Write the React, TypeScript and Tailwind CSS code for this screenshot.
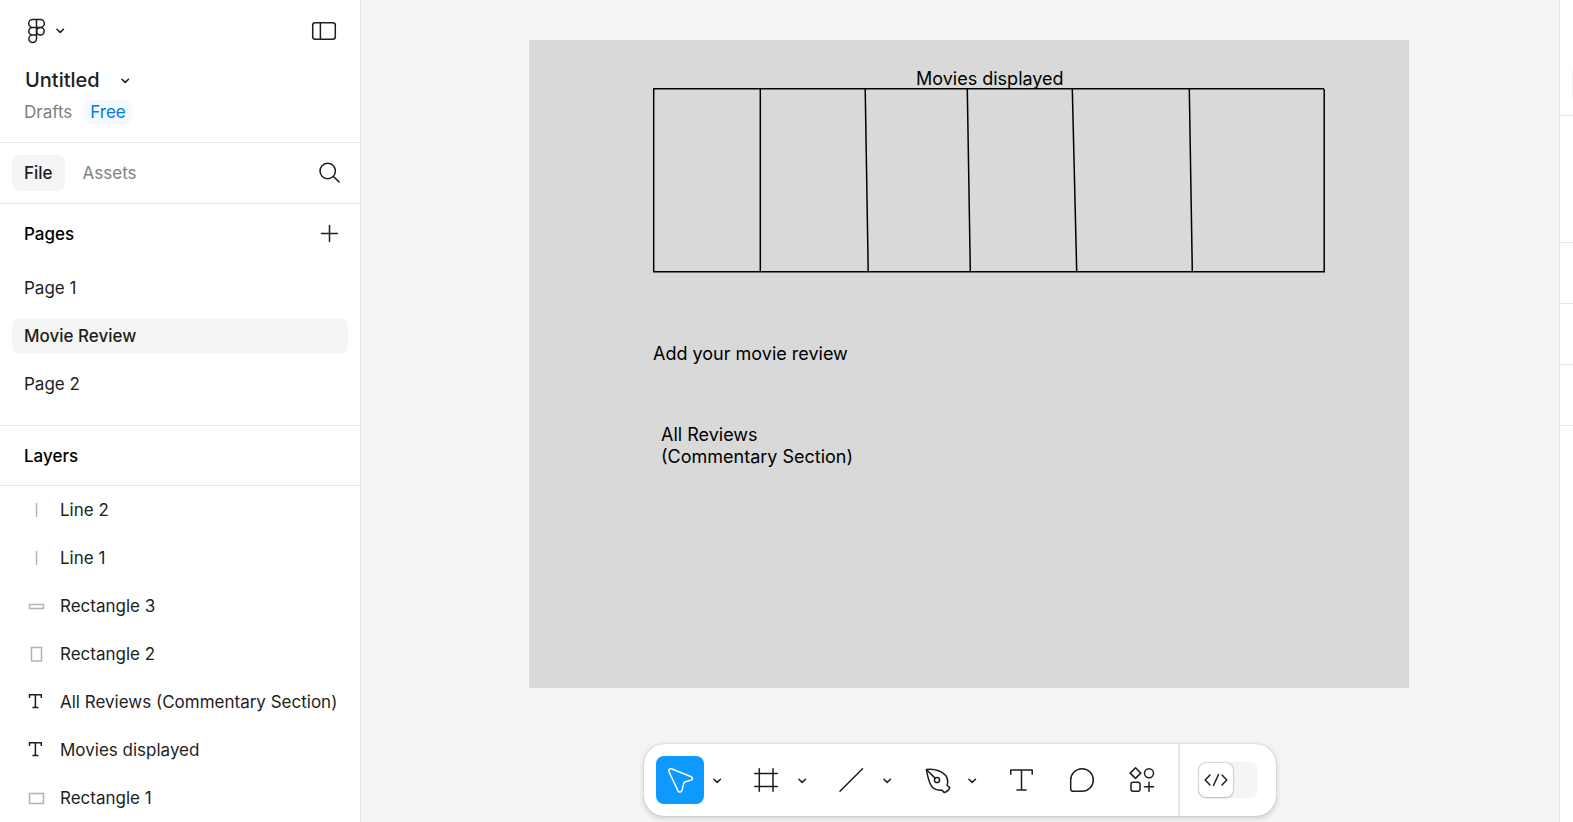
import React, { useState } from "react";

type IconProps = { className?: string; children: React.ReactNode };

/* All interface icons are drawn on a 36-unit grid. */
function Icon({ className = "", children }: IconProps) {
  return (
    <svg
      viewBox="0 0 36 36"
      className={`size-9 shrink-0 ${className}`}
      fill="none"
      stroke="currentColor"
      strokeWidth="1.5"
      strokeLinecap="round"
      strokeLinejoin="round"
      aria-hidden="true"
    >
      {children}
    </svg>
  );
}

function Chevron() {
  return (
    <svg viewBox="0 0 12 12" className="size-3 shrink-0" fill="none" stroke="currentColor" strokeWidth="1.5" strokeLinecap="round" strokeLinejoin="round" aria-hidden="true">
      <path d="M2.900 5.200 6.200 8.400l3.300-3.200" />
    </svg>
  );
}

type LayerKind = "line" | "wide" | "tall" | "text" | "rect";

function LayerIcon({ kind }: { kind: LayerKind }) {
  return (
    <svg viewBox="0 0 24 24" className="size-6 shrink-0" fill="none" stroke="#b3b3b3" strokeWidth="1.5" aria-hidden="true">
      {kind === "line" && <path d="M12.500 5v14" />}
      {kind === "wide" && <rect x="5.500" y="10.500" width="14" height="4" />}
      {kind === "tall" && <rect x="7.500" y="5.500" width="10" height="13.500" />}
      {kind === "rect" && <rect x="5.500" y="7.500" width="14" height="10" />}
      {kind === "text" && <path d="M5.500 8V4.800h11.800V8M11.400 4.800v13M8.400 17.500h6" stroke="#1e1e1e" />}
    </svg>
  );
}

const pages = ["Page 1", "Movie Review", "Page 2"];

const layers: { name: string; kind: LayerKind }[] = [
  { name: "Line 2", kind: "line" },
  { name: "Line 1", kind: "line" },
  { name: "Rectangle 3", kind: "wide" },
  { name: "Rectangle 2", kind: "tall" },
  { name: "All Reviews (Commentary Section)", kind: "text" },
  { name: "Movies displayed", kind: "text" },
  { name: "Rectangle 1", kind: "rect" },
];

function LeftPanel() {
  const [page, setPage] = useState("Movie Review");
  return (
    <aside className="flex w-[361px] shrink-0 flex-col border-r border-[#e6e6e6] bg-white">
      <header className="flex h-[143px] shrink-0 flex-col border-b border-[#e6e6e6] px-[18px] pt-3">
        <div className="flex items-center justify-between">
          <button className="flex items-center" aria-label="Main menu">
            <Icon>
              <path d="M18.500 7.600h-3.900a3.900 3.900 0 0 0 0 7.800h3.900zM18.500 7.600h3.900a3.900 3.900 0 0 1 0 7.800h-3.900M18.500 15.400h-3.900a3.800 3.800 0 0 0 0 7.600h3.900zM14.600 23a3.800 3.800 0 1 0 3.900 3.800V23" />
              <circle cx="22.400" cy="19.200" r="3.800" />
            </Icon>
            <Chevron />
          </button>
          <button aria-label="Minimize UI">
            <Icon>
              <rect x="6.700" y="10.700" width="22.600" height="16.600" rx="2.500" />
              <path d="M14.400 10.700v16.600" />
            </Icon>
          </button>
        </div>
        <button className="mt-4 flex h-8 items-center gap-[19px] self-start pl-[7px] text-[20px] font-medium">
          Untitled
          <Chevron />
        </button>
        <div className="mt-1 flex items-center gap-3 pl-1.5">
          <a href="#drafts" className="text-[#808080]">Drafts</a>
          <a href="#plan" className="h-6 rounded-lg bg-[#f2f9ff] px-1.5 text-[#007be5]">Free</a>
        </div>
      </header>

      <div className="flex h-[61px] shrink-0 items-center border-b border-[#e6e6e6] px-3">
        <button className="h-9 rounded-lg bg-[#f5f5f5] px-3 font-medium">File</button>
        <button className="ml-1.5 h-9 px-3 text-[#808080]">Assets</button>
        <button className="ml-auto" aria-label="Find">
          <Icon>
            <circle cx="15.700" cy="16" r="7.700" />
            <path d="m21.400 21.500 5.600 5.400" />
          </Icon>
        </button>
      </div>

      <section className="shrink-0 border-b border-[#e6e6e6] px-3 pb-[23px]">
        <div className="flex h-[60px] items-center justify-between pl-3">
          <h2 className="font-medium text-black">Pages</h2>
          <button aria-label="Add new page">
            <Icon>
              <path d="M17.500 9.500v16M9.500 17.500h16" />
            </Icon>
          </button>
        </div>
        <ul className="flex flex-col gap-3 pt-1.5">
          {pages.map((name) => (
            <li key={name}>
              <button
                onClick={() => setPage(name)}
                className={`h-9 w-full rounded-lg px-3 text-left ${page === name ? "bg-[#f5f5f5] font-medium" : ""}`}
              >
                {name}
              </button>
            </li>
          ))}
        </ul>
      </section>

      <section className="min-h-0 grow overflow-hidden">
        <h2 className="flex h-[60px] items-center border-b border-[#e6e6e6] pl-6 font-medium text-black">Layers</h2>
        <ul className="flex flex-col pl-6">
          {layers.map((layer) => (
            <li key={layer.name} className="flex h-12 items-center gap-3">
              <LayerIcon kind={layer.kind} />
              <button className="whitespace-nowrap">{layer.name}</button>
            </li>
          ))}
        </ul>
      </section>
    </aside>
  );
}

function Artboard() {
  return (
    <div className="absolute top-10 left-[168px] h-[648px] w-[880px] bg-[#d9d9d9] text-[18px] leading-[22px] text-black">
      <svg viewBox="0 0 880 648" className="absolute inset-0 size-full" fill="none" stroke="#000" strokeWidth="1.5" aria-hidden="true">
        <path d="M124 48.700H795M124.700 48.700V231.700H795.200V49" />
        <path d="M231.300 49V231M336.200 49 339.200 231M438.300 49 441.300 231M543.300 49 547.700 231M660.300 49 663.300 231" />
      </svg>
      <p className="absolute top-7 left-[387px] whitespace-nowrap">Movies displayed</p>
      <p className="absolute top-[303px] left-[124px] whitespace-nowrap">Add your movie review</p>
      <p className="absolute top-[384px] left-[132px] whitespace-nowrap">
        All Reviews
        <br />
        (Commentary Section)
      </p>
    </div>
  );
}

function ToolButton({ label, active = false, children }: { label: string; active?: boolean; children: React.ReactNode }) {
  return (
    <button
      aria-label={label}
      className={`flex size-12 items-center justify-center rounded-lg ${active ? "bg-[#0d99ff] text-white" : ""}`}
    >
      <Icon>{children}</Icon>
    </button>
  );
}

function ToolMenu({ label }: { label: string }) {
  return (
    <button aria-label={label} className="flex h-12 w-[25px] items-center justify-center">
      <Chevron />
    </button>
  );
}

function Toolbar() {
  const [devMode, setDevMode] = useState(false);
  return (
    <div className="absolute bottom-1.5 left-1/2 flex -translate-x-1/2 rounded-[20px] bg-white shadow-[0_0_1px_rgba(0,0,0,0.35),0_2px_6px_rgba(0,0,0,0.18)]">
      <div className="flex gap-3 border-r-2 border-[#e6e6e6] p-3">
        <div className="flex">
          <ToolButton label="Move" active>
            <path d="M6.800 9.200c-.6-1.600.9-3 2.500-2.400l20 8c1.600.7 1.500 2.800-.1 3.300l-5.700 1.700c-1 .3-1.500.9-1.800 1.800l-1.800 7c-.5 1.900-3.100 2-3.900.3z" />
          </ToolButton>
          <ToolMenu label="Move tools" />
        </div>
        <div className="flex">
          <ToolButton label="Frame">
            <path d="M12.300 6.800v22.500M26 6.800v22.500M7.700 11.400h22.600M7.700 24.600h22.600" />
          </ToolButton>
          <ToolMenu label="Region tools" />
        </div>
        <div className="flex">
          <ToolButton label="Line">
            <path d="M8 29.300 30.500 6.700" />
          </ToolButton>
          <ToolMenu label="Shape tools" />
        </div>
        <div className="flex">
          <ToolButton label="Pen">
            <path d="M9.400 7.600C14 7 18 7.400 21.500 8.800c5.500 2.200 9 6.200 9.200 10.200.1 1.500-.2 3-.7 4.200l2.800 2.400c-.8 2.300-3 4.300-5.500 5l-2.600-2.600c-6 .8-9.700-1.500-11.700-6.700C11.200 17 10.200 12 9.400 7.600z" />
            <circle cx="20" cy="18" r="2.600" />
            <path d="m9.600 7.800 8.500 8.300" />
          </ToolButton>
          <ToolMenu label="Drawing tools" />
        </div>
        <div className="ml-0.5 flex gap-3">
          <ToolButton label="Text">
            <path d="M6.800 12.300V7.900h21.400v4.400M17.500 7.900v20M13 27.900h9" />
          </ToolButton>
          <ToolButton label="Comment">
            <path d="M18 6.700a11.300 11.300 0 0 1 0 22.600H9a2.300 2.300 0 0 1-2.300-2.300V18A11.300 11.300 0 0 1 18 6.700z" />
          </ToolButton>
          <ToolButton label="Actions">
            <path d="m11.500 5.800 5.300 5.300-5.300 5.300-5.300-5.300zM25 20.200v9.200M20.400 24.800h9.200" />
            <circle cx="25" cy="11.200" r="4.500" />
            <rect x="7" y="20.300" width="9" height="9" rx="2" />
          </ToolButton>
        </div>
      </div>
      <div className="flex items-center px-[18px]">
        <button
          role="switch"
          aria-checked={devMode}
          aria-label="Dev Mode"
          onClick={() => setDevMode(!devMode)}
          className={`flex h-9 w-[60px] items-center rounded-lg bg-[#f5f5f5] p-px ${devMode ? "justify-end" : ""}`}
        >
          <span className="flex size-[34px] items-center justify-center rounded-[7px] bg-white shadow-[0_0_2px_rgba(0,0,0,0.4),0_1px_2px_rgba(0,0,0,0.15)]">
            <svg viewBox="0 0 24 24" className="size-6" fill="none" stroke="currentColor" strokeWidth="1.5" strokeLinecap="round" strokeLinejoin="round" aria-hidden="true">
              <path d="M6 7 1.200 12 6 17M18 7l4.800 5-4.800 5M14.500 6.500l-5 11" />
            </svg>
          </span>
        </button>
      </div>
    </div>
  );
}

function RightPanel() {
  return (
    <aside className="flex w-3.5 shrink-0 flex-col overflow-hidden border-l border-[#e6e6e6] bg-white">
      <div className="flex h-[116px] shrink-0 justify-end border-b border-[#e6e6e6] pt-[71px]">
        <div className="h-7 w-px bg-[#f5f5f5]" />
      </div>
      <div className="h-[127px] shrink-0 border-b border-[#e6e6e6]" />
      <div className="h-[61px] shrink-0 border-b border-[#e6e6e6]" />
      <div className="h-[61px] shrink-0 border-b border-[#e6e6e6]" />
      <div className="h-[61px] shrink-0 border-b border-[#e6e6e6]" />
    </aside>
  );
}

export default function App() {
  return (
    <div className="flex h-screen overflow-hidden bg-[#f5f5f5] font-['Inter',sans-serif] text-[17px] leading-6 text-[#1e1e1e]">
      <LeftPanel />
      <main className="relative min-w-0 grow overflow-hidden">
        <Artboard />
        <Toolbar />
      </main>
      <RightPanel />
    </div>
  );
}
